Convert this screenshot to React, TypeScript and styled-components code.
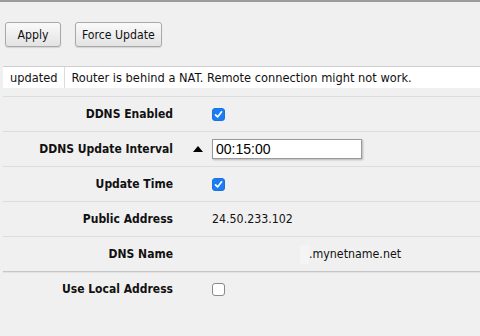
import styled, { createGlobalStyle } from 'styled-components'

const GlobalStyle = createGlobalStyle`
  html, body {
    margin: 0;
    padding: 0;
    background: #f0f0f0;
  }
  body {
    font-family: "DejaVu Sans Condensed", "DejaVu Sans", sans-serif;
    font-size: 12.7px;
    color: #111;
  }
`

const Page = styled.div`
  min-height: 336px;
  border-top: 2px solid #9c9c9c;
  box-sizing: border-box;
  overflow: hidden;
`

const Toolbar = styled.div`
  display: flex;
  gap: 14px;
  padding: 20px 5px 19px;
`

const Button = styled.button`
  height: 25px;
  min-width: 56px;
  padding: 0 6px;
  font-family: "DejaVu Sans Condensed", "DejaVu Sans", sans-serif;
  font-size: 12.2px;
  color: #111;
  border: 1px solid #a9a9a9;
  border-radius: 3px;
  background: linear-gradient(#fafafa, #e3e3e3);
  box-shadow: 0 1px 1px rgba(0, 0, 0, 0.12);
  cursor: pointer;
`

const StatusBar = styled.div`
  display: flex;
  align-items: center;
  height: 21px;
  margin: 0 0 8px 3px;
  background: #fff;
  border-top: 1px solid #cfcfcf;
`

const StatusCell = styled.div<{ $first?: boolean }>`
  height: 100%;
  display: flex;
  align-items: center;
  padding: ${({ $first }) => ($first ? '0 7px 0 7px' : '0 7px 0 6px')};
  border-right: ${({ $first }) => ($first ? '1px solid #dcdcdc' : 'none')};
`

const Form = styled.div`
  margin-left: 3px;
  border-top: 1px solid #dddddd;
`

const Row = styled.div<{ $divider?: 'light' | 'section' | 'none' }>`
  display: grid;
  grid-template-columns: 170px 39px 1fr;
  align-items: center;
  height: 34px;
  border-bottom: ${({ $divider }) =>
    $divider === 'none' ? '0' : $divider === 'section' ? '1px solid #c6c6c6' : '1px solid #dddddd'};
  box-shadow: ${({ $divider }) => ($divider === 'section' ? '0 1px 0 #e2e2e2' : 'none')};
`

const Label = styled.div`
  text-align: right;
  font-weight: bold;
  font-size: 12px;
`

const Marker = styled.div`
  display: flex;
  justify-content: flex-end;
  padding-right: 9px;
`

const Value = styled.div`
  display: flex;
  align-items: center;
  font-size: 12.3px;
`

const CheckBox = styled.span<{ $checked?: boolean }>`
  display: inline-flex;
  align-items: center;
  justify-content: center;
  width: 13px;
  height: 13px;
  box-sizing: border-box;
  border-radius: 3px;
  background: ${({ $checked }) => ($checked ? '#1b7cf3' : '#fff')};
  border: ${({ $checked }) => ($checked ? '1px solid #1872e0' : '1px solid #8a8a8a')};
`

const TextInput = styled.input`
  width: 150px;
  height: 20px;
  box-sizing: border-box;
  padding: 0 3px;
  font-family: "Liberation Sans", Arial, sans-serif;
  font-size: 14px;
  color: #000;
  border: 1px solid #9a9a9a;
  box-shadow: 1px 1px 2px rgba(0, 0, 0, 0.25);
  background: #fff;
  outline: none;
`

const Suffix = styled.span`
  display: inline-flex;
  align-items: center;
`

const Blank = styled.span`
  display: inline-block;
  width: 9px;
  height: 19px;
  margin-left: 88px;
  background: #f4f4f4;
`

function Check({ checked }: { checked?: boolean }) {
  return (
    <CheckBox $checked={checked}>
      {checked && (
        <svg width="9" height="9" viewBox="0 0 9 9">
          <path d="M1.5 4.8 L3.6 6.9 L7.6 1.8" fill="none" stroke="#fff" strokeWidth="1.7" strokeLinecap="round" strokeLinejoin="round" />
        </svg>
      )}
    </CheckBox>
  )
}

function UpArrow() {
  return (
    <svg width="10" height="6" viewBox="0 0 10 6">
      <path d="M5 0 L10 6 L0 6 Z" fill="#000" />
    </svg>
  )
}

export default function App() {
  return (
    <Page>
      <GlobalStyle />
      <Toolbar>
        <Button>Apply</Button>
        <Button>Force Update</Button>
      </Toolbar>
      <StatusBar>
        <StatusCell $first>updated</StatusCell>
        <StatusCell>Router is behind a NAT. Remote connection might not work.</StatusCell>
      </StatusBar>
      <Form>
        <Row>
          <Label>DDNS Enabled</Label>
          <Marker />
          <Value><Check checked /></Value>
        </Row>
        <Row>
          <Label>DDNS Update Interval</Label>
          <Marker><UpArrow /></Marker>
          <Value><TextInput defaultValue="00:15:00" /></Value>
        </Row>
        <Row>
          <Label>Update Time</Label>
          <Marker />
          <Value><Check checked /></Value>
        </Row>
        <Row>
          <Label>Public Address</Label>
          <Marker />
          <Value>24.50.233.102</Value>
        </Row>
        <Row $divider="section">
          <Label>DNS Name</Label>
          <Marker />
          <Value>
            <Blank />
            <Suffix>.mynetname.net</Suffix>
          </Value>
        </Row>
        <Row $divider="none">
          <Label>Use Local Address</Label>
          <Marker />
          <Value><Check /></Value>
        </Row>
      </Form>
    </Page>
  )
}
